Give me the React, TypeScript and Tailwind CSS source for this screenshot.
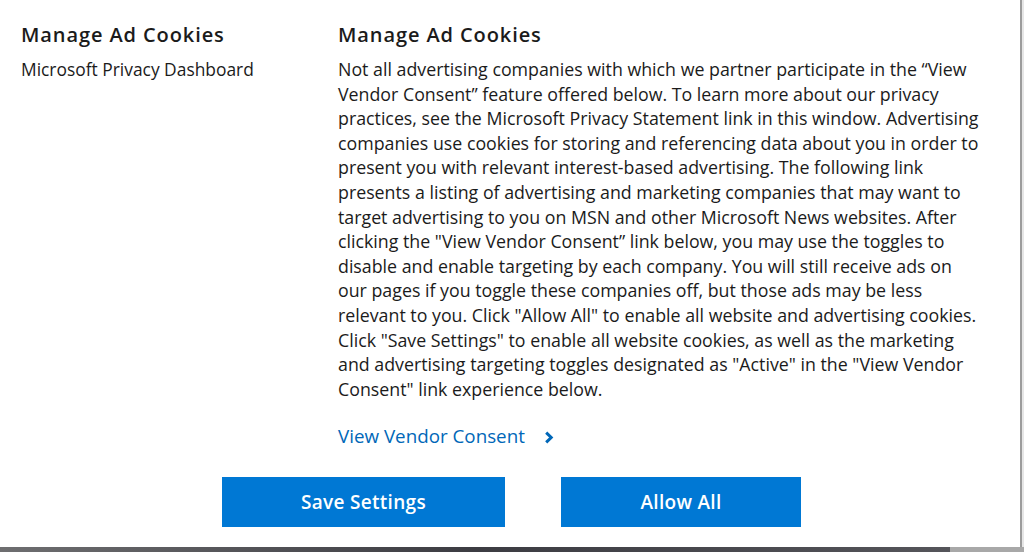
import React from 'react';

const bodyLines = [
  'Not all advertising companies with which we partner participate in the \u201cView',
  'Vendor Consent\u201d feature offered below. To learn more about our privacy',
  'practices, see the Microsoft Privacy Statement link in this window. Advertising',
  'companies use cookies for storing and referencing data about you in order to',
  'present you with relevant interest-based advertising. The following link',
  'presents a listing of advertising and marketing companies that may want to',
  'target advertising to you on MSN and other Microsoft News websites. After',
  'clicking the "View Vendor Consent\u201d link below, you may use the toggles to',
  'disable and enable targeting by each company. You will still receive ads on',
  'our pages if you toggle these companies off, but those ads may be less',
  'relevant to you. Click "Allow All" to enable all website and advertising cookies.',
  'Click "Save Settings" to enable all website cookies, as well as the marketing',
  'and advertising targeting toggles designated as "Active" in the "View Vendor',
  'Consent" link experience below.',
];

export default function App() {
  return (
    <div className="w-[1024px] h-[552px] overflow-hidden bg-[#5a5a5e] flex flex-col font-['Open_Sans',sans-serif] text-[#1b1b1b]">
      <div className="flex flex-1">
        <div className="flex-1 bg-white border-r-2 border-[#9c9c9c] flex flex-col">
          <div className="flex pt-[22px]">
            <div className="w-[338px] pl-[21px]">
              <h2 className="text-[20px] font-semibold leading-[26px] tracking-[0.9px]">Manage Ad Cookies</h2>
              <p className="mt-[9px] text-[17.4px] leading-[24px]">Microsoft Privacy Dashboard</p>
            </div>
            <div className="flex-1">
              <h2 className="text-[20px] font-semibold leading-[26px] tracking-[0.9px]">Manage Ad Cookies</h2>
              <p className="mt-[9px] text-[17.8px] leading-[24.6px]">
                {bodyLines.map((line) => (
                  <span key={line} className="block whitespace-nowrap">{line}</span>
                ))}
              </p>
              <a className="mt-[23px] inline-flex items-center gap-[19px] text-[18.8px] leading-[24px] text-[#0067b8]">
                View Vendor Consent
                <svg width="10" height="13" viewBox="0 0 10 13" className="mt-[2px]">
                  <path d="M2.2 1.6 L7.2 6.5 L2.2 11.4" fill="none" stroke="#0067b8" strokeWidth="3" />
                </svg>
              </a>
            </div>
          </div>
          <div className="flex pl-[222px] gap-[56px] mt-[28px]">
            <button className="w-[283px] h-[50px] bg-[#0078d4] text-white text-[19px] font-semibold tracking-[0.3px]">Save Settings</button>
            <button className="w-[240px] h-[50px] bg-[#0078d4] text-white text-[19px] font-semibold tracking-[0.3px]">Allow All</button>
          </div>
        </div>
        <div className="w-[2px] bg-[#e6e6e6]" />
      </div>
      <div className="h-[5px] flex">
        <div className="flex-1 bg-gradient-to-r from-[#6e6e70] via-[#3c3c42] to-[#55555a]" />
        <div className="w-[74px] bg-[#a8a8a8]" />
      </div>
    </div>
  );
}
